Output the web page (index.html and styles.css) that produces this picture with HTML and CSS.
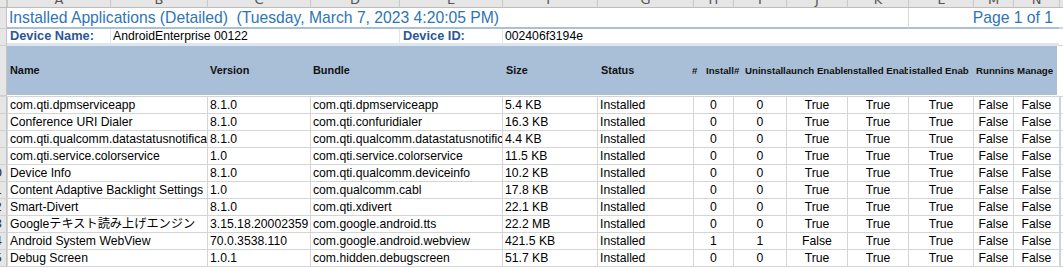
FILE: index.html
```html
<!DOCTYPE html>
<html>
    <head>
        <link rel="stylesheet" href="styles.css">
    </head>
    <body>
        <div class="sheet">
            <div class="row colhead">
                <div class="rh"></div>
                <div class="col"><span>A</span></div>
                <div class="col"><span>B</span></div>
                <div class="col"><span>C</span></div>
                <div class="col"><span>D</span></div>
                <div class="col"><span>E</span></div>
                <div class="col"><span>F</span></div>
                <div class="col"><span>G</span></div>
                <div class="col"><span>H</span></div>
                <div class="col"><span>I</span></div>
                <div class="col"><span>J</span></div>
                <div class="col"><span>K</span></div>
                <div class="col"><span>L</span></div>
                <div class="col"><span>M</span></div>
                <div class="col"><span>N</span></div>
                <div class="col"></div>
            </div>

            <div class="row title-row">
                <div class="rh"><span>1</span></div>
                <div class="title">Installed Applications (Detailed)&nbsp; (Tuesday, March 7, 2023 4:20:05 PM)</div>
                <div class="page">Page 1 of 1</div>
                <div class="rest"></div>
            </div>

            <div class="row device-row">
                <div class="rh"><span>2</span></div>
                <div class="label">Device Name:</div>
                <div class="value span3">AndroidEnterprise 00122</div>
                <div class="label">Device ID:</div>
                <div class="value span9">002406f3194e</div>
                <div class="rest"></div>
            </div>

            <div class="band">
                <div class="rh"><span>3</span></div>
                <span class="h h-name">Name</span>
                <span class="h h-version">Version</span>
                <span class="h h-bundle">Bundle</span>
                <span class="h h-size">Size</span>
                <span class="h h-status">Status</span>
                <span class="h small h-hash">#</span>
                <span class="h small h-install">Install#</span>
                <span class="h small h-uninstall">Uninstall</span>
                <span class="h small h-launch">launch Enabled</span>
                <span class="h small h-inst1">nstalled Enabled</span>
                <span class="h small h-inst2">istalled Enabled</span>
                <span class="h small h-running">Runnin</span>
                <span class="h small h-managed">s Managed</span>
            </div>

            <div class="row data">
                <div class="rh"><span>6</span></div>
                <div class="c span2">com.qti.dpmserviceapp</div>
                <div class="c">8.1.0</div>
                <div class="c span2">com.qti.dpmserviceapp</div>
                <div class="c">5.4 KB</div>
                <div class="c">Installed</div>
                <div class="c mid">0</div>
                <div class="c mid">0</div>
                <div class="c mid">True</div>
                <div class="c mid">True</div>
                <div class="c mid">True</div>
                <div class="c mid">False</div>
                <div class="c mid">False</div>
                <div class="c rest"></div>
            </div>
            <div class="row data">
                <div class="rh"><span>7</span></div>
                <div class="c span2">Conference URI Dialer</div>
                <div class="c">8.1.0</div>
                <div class="c span2">com.qti.confuridialer</div>
                <div class="c">16.3 KB</div>
                <div class="c">Installed</div>
                <div class="c mid">0</div>
                <div class="c mid">0</div>
                <div class="c mid">True</div>
                <div class="c mid">True</div>
                <div class="c mid">True</div>
                <div class="c mid">False</div>
                <div class="c mid">False</div>
                <div class="c rest"></div>
            </div>
            <div class="row data">
                <div class="rh"><span>8</span></div>
                <div class="c span2">com.qti.qualcomm.datastatusnotification</div>
                <div class="c">8.1.0</div>
                <div class="c span2">com.qti.qualcomm.datastatusnotification</div>
                <div class="c">4.4 KB</div>
                <div class="c">Installed</div>
                <div class="c mid">0</div>
                <div class="c mid">0</div>
                <div class="c mid">True</div>
                <div class="c mid">True</div>
                <div class="c mid">True</div>
                <div class="c mid">False</div>
                <div class="c mid">False</div>
                <div class="c rest"></div>
            </div>
            <div class="row data">
                <div class="rh"><span>9</span></div>
                <div class="c span2">com.qti.service.colorservice</div>
                <div class="c">1.0</div>
                <div class="c span2">com.qti.service.colorservice</div>
                <div class="c">11.5 KB</div>
                <div class="c">Installed</div>
                <div class="c mid">0</div>
                <div class="c mid">0</div>
                <div class="c mid">True</div>
                <div class="c mid">True</div>
                <div class="c mid">True</div>
                <div class="c mid">False</div>
                <div class="c mid">False</div>
                <div class="c rest"></div>
            </div>
            <div class="row data">
                <div class="rh"><span>10</span></div>
                <div class="c span2">Device Info</div>
                <div class="c">8.1.0</div>
                <div class="c span2">com.qti.qualcomm.deviceinfo</div>
                <div class="c">10.2 KB</div>
                <div class="c">Installed</div>
                <div class="c mid">0</div>
                <div class="c mid">0</div>
                <div class="c mid">True</div>
                <div class="c mid">True</div>
                <div class="c mid">True</div>
                <div class="c mid">False</div>
                <div class="c mid">False</div>
                <div class="c rest"></div>
            </div>
            <div class="row data">
                <div class="rh"><span>11</span></div>
                <div class="c span2">Content Adaptive Backlight Settings</div>
                <div class="c">1.0</div>
                <div class="c span2">com.qualcomm.cabl</div>
                <div class="c">17.8 KB</div>
                <div class="c">Installed</div>
                <div class="c mid">0</div>
                <div class="c mid">0</div>
                <div class="c mid">True</div>
                <div class="c mid">True</div>
                <div class="c mid">True</div>
                <div class="c mid">False</div>
                <div class="c mid">False</div>
                <div class="c rest"></div>
            </div>
            <div class="row data">
                <div class="rh"><span>12</span></div>
                <div class="c span2">Smart-Divert</div>
                <div class="c">8.1.0</div>
                <div class="c span2">com.qti.xdivert</div>
                <div class="c">22.1 KB</div>
                <div class="c">Installed</div>
                <div class="c mid">0</div>
                <div class="c mid">0</div>
                <div class="c mid">True</div>
                <div class="c mid">True</div>
                <div class="c mid">True</div>
                <div class="c mid">False</div>
                <div class="c mid">False</div>
                <div class="c rest"></div>
            </div>
            <div class="row data">
                <div class="rh"><span>13</span></div>
                <div class="c span2">Googleテキスト読み上げエンジン</div>
                <div class="c">3.15.18.20002359</div>
                <div class="c span2">com.google.android.tts</div>
                <div class="c">22.2 MB</div>
                <div class="c">Installed</div>
                <div class="c mid">0</div>
                <div class="c mid">0</div>
                <div class="c mid">True</div>
                <div class="c mid">True</div>
                <div class="c mid">True</div>
                <div class="c mid">False</div>
                <div class="c mid">False</div>
                <div class="c rest"></div>
            </div>
            <div class="row data">
                <div class="rh"><span>14</span></div>
                <div class="c span2">Android System WebView</div>
                <div class="c">70.0.3538.110</div>
                <div class="c span2">com.google.android.webview</div>
                <div class="c">421.5 KB</div>
                <div class="c">Installed</div>
                <div class="c mid">1</div>
                <div class="c mid">1</div>
                <div class="c mid">False</div>
                <div class="c mid">True</div>
                <div class="c mid">True</div>
                <div class="c mid">False</div>
                <div class="c mid">False</div>
                <div class="c rest"></div>
            </div>
            <div class="row data">
                <div class="rh"><span>15</span></div>
                <div class="c span2">Debug Screen</div>
                <div class="c">1.0.1</div>
                <div class="c span2">com.hidden.debugscreen</div>
                <div class="c">51.7 KB</div>
                <div class="c">Installed</div>
                <div class="c mid">0</div>
                <div class="c mid">0</div>
                <div class="c mid">True</div>
                <div class="c mid">True</div>
                <div class="c mid">True</div>
                <div class="c mid">False</div>
                <div class="c mid">False</div>
                <div class="c rest"></div>
            </div>
        </div>
    </body>
</html>
```

FILE: styles.css
```css
body {
    margin: 0;
    background-color: #ffffff;
    font-family: "Liberation Sans", Arial, "Noto Sans CJK JP", sans-serif;
    overflow: hidden;
}

.sheet {
    width: 1063px;
}

.row {
    display: grid;
    grid-template-columns: 7px 103px 97px 103px 89px 103px 95px 96px 40px 53px 61px 61px 65px 40px 46px 1fr;
}

/* row numbers, mostly hidden off the left edge */
.rh {
    background-color: #e6e6e6;
    border-right: 1px solid #c4c4c4;
    border-bottom: 1px solid #d0d0d0;
    box-sizing: border-box;
    overflow: hidden;
}

.rh span {
    display: block;
    width: 26px;
    margin-left: -19px;
    text-align: center;
    font-family: "DejaVu Sans", sans-serif;
    font-size: 13px;
    line-height: 16px;
    color: #333;
}

/* column letters strip */
.colhead {
    height: 8px;
    background-color: #e6e6e6;
    border-bottom: 1px solid #bcbcbc;
    box-sizing: border-box;
}

.colhead .rh {
    border-bottom: none;
}

.col {
    border-left: 1px solid #c8c8c8;
    overflow: hidden;
    display: flex;
    justify-content: center;
    align-items: flex-end;
}

.col span {
    font-family: "DejaVu Sans", sans-serif;
    font-size: 13px;
    line-height: 14px;
    color: #555;
    flex-shrink: 0;
}

/* title */
.title-row {
    height: 21px;
}

.title {
    grid-column: span 11;
    border-bottom: 2px solid #a9c0d9;
    color: #2e75b6;
    font-size: 15.7px;
    line-height: 19px;
    padding-left: 2px;
    white-space: nowrap;
}

.page {
    grid-column: span 3;
    border-left: 1px solid #dadada;
    border-bottom: 2px solid #a9c0d9;
    color: #2e75b6;
    font-size: 15.7px;
    line-height: 19px;
    text-align: right;
    padding-right: 6px;
}

.title-row .rest {
    border-bottom: 2px solid #c9d6e4;
}

/* device row */
.device-row {
    height: 17px;
}

.label {
    color: #2b5797;
    font-weight: bold;
    font-size: 12.8px;
    line-height: 14px;
    padding-left: 3px;
    white-space: nowrap;
    border-bottom: 3px solid #dde5ee;
}

.label + .value,
.value + .label {
    border-left: 1px solid #dde5ee;
}

.value {
    font-size: 12.2px;
    line-height: 14px;
    padding-left: 2px;
    white-space: nowrap;
    border-bottom: 3px solid #dde5ee;
}

.span3 {
    grid-column: span 3;
}

.span9 {
    grid-column: span 9;
    border-left: 1px solid #dde5ee;
}

.device-row .rest {
    border-bottom: 1px solid #d4d4d4;
}

/* header band */
.band {
    display: flex;
    height: 51px;
    background: linear-gradient(#a9bfd7, #a9bfd7) 7px 0 / 1050px 49px no-repeat;
    border-bottom: 1px solid #d4d4d4;
    box-sizing: border-box;
    align-items: stretch;
}

.band .rh {
    width: 7px;
    flex-shrink: 0;
}

.h {
    flex-shrink: 0;
    font-weight: bold;
    font-size: 10.9px;
    line-height: 49px;
    color: #111;
    white-space: nowrap;
    overflow: hidden;
}

.h.small {
    font-size: 9.7px;
}

.h-name { width: 197px; padding-left: 3px; }
.h-version { width: 100px; padding-left: 3px; }
.h-bundle { width: 189px; padding-left: 3px; }
.h-size { width: 91px; padding-left: 4px; }
.h-status { width: 91px; padding-left: 4px; }
.h-hash { width: 14px; }
.h-install { width: 39px; }
.h-uninstall { width: 38px; }
.h-launch { width: 64px; }
.h-inst1 { width: 61px; }
.h-inst2 { width: 60px; padding-left: 1px; }
.h-running { width: 33px; padding-left: 7px; }
.h-managed { width: 44px; }

/* data rows */
.data {
    height: 17px;
}

.c {
    border-left: 1px solid #d4d4d4;
    border-bottom: 1px solid #d4d4d4;
    padding-left: 2px;
    font-size: 12.2px;
    line-height: 16px;
    color: #000;
    white-space: nowrap;
    overflow: hidden;
}

.span2 {
    grid-column: span 2;
}

.mid {
    text-align: center;
    padding-left: 0;
}

.data .rest {
    border-left: 2px solid #c5d4e6;
}
```
